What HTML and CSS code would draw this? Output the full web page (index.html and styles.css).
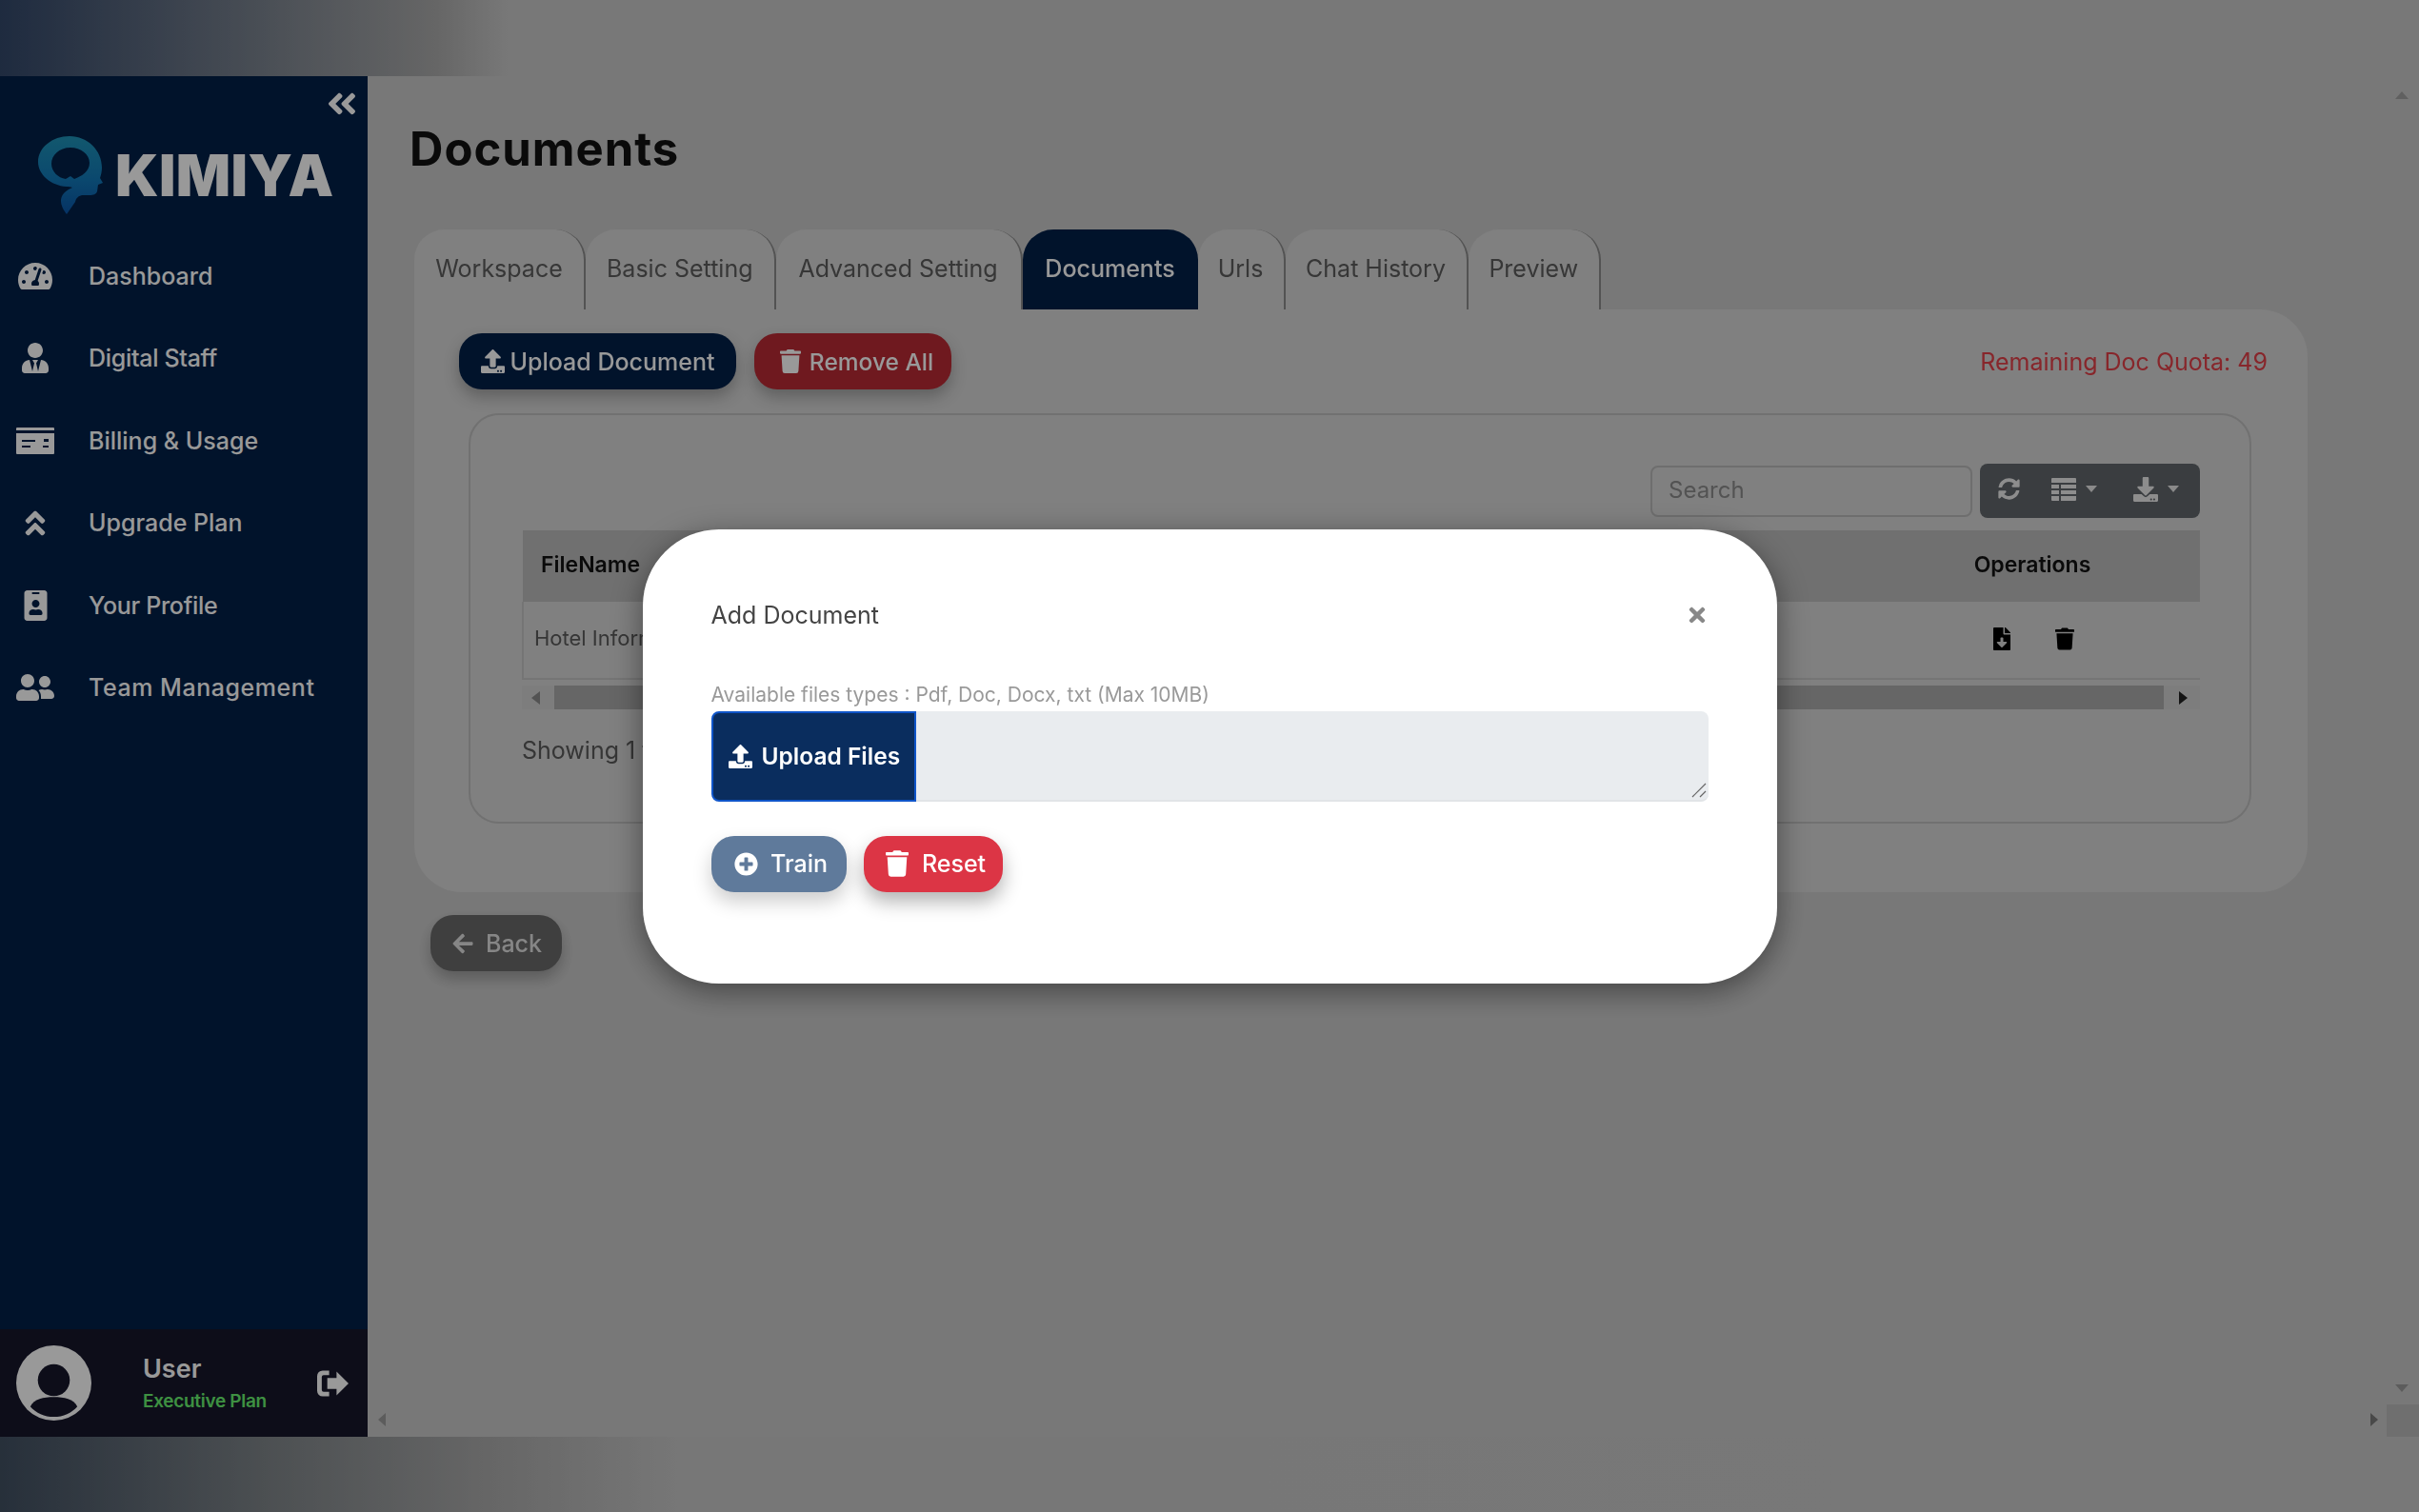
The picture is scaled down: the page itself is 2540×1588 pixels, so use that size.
FILE: index.html
```html
<!DOCTYPE html>
<html lang="en">
<head>
<meta charset="utf-8">
<title>Documents</title>
<link rel="stylesheet" href="styles.css">
</head>
<body>
<svg class="defs" aria-hidden="true">
  <symbol id="i-upload" viewBox="0 0 512 512"><path d="M296 384h-80c-13.3 0-24-10.7-24-24V192h-87.7c-17.8 0-26.7-21.5-14.1-34.1L242.3 5.7c7.5-7.5 19.8-7.5 27.3 0l152.2 152.2c12.6 12.6 3.7 34.1-14.1 34.1H320v168c0 13.3-10.7 24-24 24zm216-8v112c0 13.3-10.7 24-24 24H24c-13.3 0-24-10.7-24-24V376c0-13.3 10.7-24 24-24h136v8c0 30.9 25.1 56 56 56h80c30.9 0 56-25.1 56-56v-8h136c13.3 0 24 10.7 24 24zm-124 88c0-11-9-20-20-20s-20 9-20 20 9 20 20 20 20-9 20-20zm64 0c0-11-9-20-20-20s-20 9-20 20 9 20 20 20 20-9 20-20z"/></symbol>
  <symbol id="i-download" viewBox="0 0 512 512"><path d="M216 0h80c13.3 0 24 10.7 24 24v168h87.7c17.8 0 26.7 21.5 14.1 34.1L269.7 378.3c-7.5 7.5-19.8 7.5-27.3 0L90.1 226.1c-12.6-12.6-3.7-34.1 14.1-34.1H192V24c0-13.3 10.7-24 24-24zm296 376v112c0 13.3-10.7 24-24 24H24c-13.3 0-24-10.7-24-24V376c0-13.3 10.7-24 24-24h146.7l49 49c20.1 20.1 52.5 20.1 72.6 0l49-49H488c13.3 0 24 10.7 24 24zm-124 88c0-11-9-20-20-20s-20 9-20 20 9 20 20 20 20-9 20-20zm64 0c0-11-9-20-20-20s-20 9-20 20 9 20 20 20 20-9 20-20z"/></symbol>
  <symbol id="i-trash" viewBox="0 0 448 512"><path d="M432 32H312l-9.4-18.7A24 24 0 0 0 281.1 0H166.8a23.72 23.72 0 0 0-21.4 13.3L136 32H16A16 16 0 0 0 0 48v32a16 16 0 0 0 16 16h416a16 16 0 0 0 16-16V48a16 16 0 0 0-16-16zM53.2 467a48 48 0 0 0 47.9 45h245.8a48 48 0 0 0 47.9-45L416 128H32z"/></symbol>
  <symbol id="i-dbl-left" viewBox="0 0 448 512"><path d="M223.7 239l136-136c9.4-9.4 24.6-9.4 33.9 0l22.6 22.6c9.4 9.4 9.4 24.6 0 33.9L319.9 256l96.4 96.4c9.4 9.4 9.4 24.6 0 33.9L393.7 409c-9.4 9.4-24.6 9.4-33.9 0l-136-136c-9.5-9.4-9.5-24.6-.1-34zm-192 34l136 136c9.4 9.4 24.6 9.4 33.9 0l22.6-22.6c9.4-9.4 9.4-24.6 0-33.9L127.9 256l96.4-96.4c9.4-9.4 9.4-24.6 0-33.9L201.7 103c-9.4-9.4-24.6-9.4-33.9 0l-136 136c-9.5 9.4-9.5 24.6-.1 34z"/></symbol>
  <symbol id="i-dbl-up" viewBox="0 0 320 512"><path d="M177 255.7l136 136c9.4 9.4 9.4 24.6 0 33.9l-22.6 22.6c-9.4 9.4-24.6 9.4-33.9 0L160 351.9l-96.4 96.4c-9.4 9.4-24.6 9.4-33.9 0L7 425.7c-9.4-9.4-9.4-24.6 0-33.9l136-136c9.4-9.5 24.6-9.5 34-.1zm-34-192L7 199.7c-9.4 9.4-9.4 24.6 0 33.9l22.6 22.6c9.4 9.4 24.6 9.4 33.9 0l96.4-96.4 96.4 96.4c9.4 9.4 24.6 9.4 33.9 0l22.6-22.6c9.4-9.4 9.4-24.6 0-33.9l-136-136c-9.2-9.4-24.4-9.4-33.8 0z"/></symbol>
  <symbol id="i-sync" viewBox="0 0 512 512"><path d="M370.72 133.28C339.458 104.008 298.888 87.962 255.848 88c-77.458.068-144.328 53.178-162.791 126.85-1.344 5.363-6.122 9.15-11.651 9.15H24.103c-7.498 0-13.194-6.807-11.807-14.176C33.933 94.924 134.813 8 256 8c66.448 0 126.791 26.136 171.315 68.685L463.03 40.97C478.149 25.851 504 36.559 504 57.941V192c0 13.255-10.745 24-24 24H345.941c-21.382 0-32.09-25.851-16.971-40.971l41.75-41.749zM32 296h134.059c21.382 0 32.09 25.851 16.971 40.971l-41.75 41.75c31.262 29.273 71.835 45.319 114.876 45.28 77.418-.07 144.315-53.144 162.787-126.849 1.344-5.363 6.122-9.15 11.651-9.15h57.304c7.498 0 13.194 6.807 11.807 14.176C478.067 417.076 377.187 504 256 504c-66.448 0-126.791-26.136-171.315-68.685L48.97 471.03C33.851 486.149 8 475.441 8 454.059V320c0-13.255 10.745-24 24-24z"/></symbol>
  <symbol id="i-plus" viewBox="0 0 512 512"><path d="M256 8C119 8 8 119 8 256s111 248 248 248 248-111 248-248S393 8 256 8zm144 276c0 6.6-5.4 12-12 12h-92v92c0 6.6-5.4 12-12 12h-56c-6.6 0-12-5.4-12-12v-92h-92c-6.6 0-12-5.4-12-12v-56c0-6.6 5.4-12 12-12h92v-92c0-6.6 5.4-12 12-12h56c6.6 0 12 5.4 12 12v92h92c6.6 0 12 5.4 12 12v56z"/></symbol>
  <symbol id="i-times" viewBox="0 0 352 512"><path d="M242.72 256l100.07-100.07c12.28-12.28 12.28-32.19 0-44.48l-22.24-22.24c-12.28-12.28-32.19-12.28-44.48 0L176 189.28 75.93 89.21c-12.28-12.28-32.19-12.28-44.48 0L9.21 111.45c-12.28 12.28-12.28 32.19 0 44.48L109.28 256 9.21 356.07c-12.28 12.28-12.28 32.19 0 44.48l22.24 22.24c12.28 12.28 32.2 12.28 44.48 0L176 322.72l100.07 100.07c12.28 12.28 32.2 12.28 44.48 0l22.24-22.24c12.28-12.28 12.28-32.19 0-44.48L242.72 256z"/></symbol>
  <symbol id="i-back" viewBox="0 0 448 512"><path d="M257.5 445.1l-22.2 22.2c-9.4 9.4-24.6 9.4-33.9 0L7 273c-9.4-9.4-9.4-24.6 0-33.9L201.4 44.7c9.4-9.4 24.6-9.4 33.9 0l22.2 22.2c9.5 9.5 9.3 25-.4 34.3L136.6 216H424c13.3 0 24 10.7 24 24v32c0 13.3-10.7 24-24 24H136.6l120.5 114.8c9.8 9.3 10 24.8.4 34.3z"/></symbol>
  <symbol id="i-team" viewBox="0 0 640 512"><path d="M192 256c61.9 0 112-50.1 112-112S253.9 32 192 32 80 82.1 80 144s50.1 112 112 112zm76.8 32h-8.3c-20.8 10-43.9 16-68.5 16s-47.6-6-68.5-16h-8.3C51.6 288 0 339.6 0 403.2V432c0 26.5 21.5 48 48 48h288c26.5 0 48-21.5 48-48v-28.8c0-63.6-51.6-115.2-115.2-115.2zM480 256c53 0 96-43 96-96s-43-96-96-96-96 43-96 96 43 96 96 96zm48 32h-3.8c-13.9 4.8-28.6 8-44.2 8s-30.3-3.2-44.2-8H432c-20.4 0-39.2 5.9-55.7 15.4 24.4 26.3 39.7 61.2 39.7 99.8v38.4c0 2.2-.5 4.3-.6 6.4H592c26.5 0 48-21.5 48-48 0-61.9-50.1-112-112-112z"/></symbol>
  <symbol id="i-gauge" viewBox="0 0 576 512"><path d="M288 32C128.94 32 0 160.94 0 320c0 52.8 14.25 102.26 39.06 144.8 5.61 9.62 16.3 15.2 27.44 15.2h443c11.14 0 21.83-5.58 27.44-15.2C561.75 422.26 576 372.8 576 320c0-159.06-128.94-288-288-288zm0 64c14.71 0 26.58 10.13 30.32 23.65-1.11 2.26-2.64 4.23-3.45 6.67l-9.22 27.67c-5.13 3.49-10.97 6.01-17.64 6.01-17.67 0-32-14.33-32-32S270.33 96 288 96zM96 384c-17.67 0-32-14.33-32-32s14.33-32 32-32 32 14.33 32 32-14.33 32-32 32zm48-160c-17.67 0-32-14.33-32-32s14.33-32 32-32 32 14.33 32 32-14.33 32-32 32zm246.77-72.41l-61.33 184C343.13 347.33 352 364.54 352 384c0 11.72-3.38 22.55-8.88 32H232.88c-5.5-9.45-8.88-20.28-8.88-32 0-33.94 26.5-61.43 59.9-63.59l61.34-184.01c4.17-12.56 17.73-19.45 30.36-15.17 12.57 4.19 19.35 17.79 15.17 30.36zm14.66 57.2l15.52-46.55c3.47-1.29 7.13-2.23 11.05-2.23 17.67 0 32 14.33 32 32s-14.33 32-32 32c-11.38-.01-20.89-6.28-26.57-15.22zM480 384c-17.67 0-32-14.33-32-32s14.33-32 32-32 32 14.33 32 32-14.33 32-32 32z"/></symbol>
  <symbol id="i-tie" viewBox="0 0 448 512"><path d="M224 256c70.7 0 128-57.3 128-128S294.7 0 224 0 96 57.3 96 128s57.3 128 128 128zm95.8 32.6L272 480l-32-136 32-56h-96l32 56-32 136-47.8-191.4C56.9 292 0 350.3 0 422.4V464c0 26.5 21.5 48 48 48h352c26.5 0 48-21.5 48-48v-41.6c0-72.1-56.9-130.4-128.2-133.8z"/></symbol>
  <symbol id="i-badge" viewBox="0 0 384 512"><path d="M336 0H48C21.5 0 0 21.5 0 48v416c0 26.5 21.5 48 48 48h288c26.5 0 48-21.5 48-48V48c0-26.5-21.5-48-48-48zM144 32h96c8.8 0 16 7.2 16 16s-7.2 16-16 16h-96c-8.8 0-16-7.2-16-16s7.2-16 16-16zm48 128c35.3 0 64 28.7 64 64s-28.7 64-64 64-64-28.7-64-64 28.7-64 64-64zm112 236.8c0 10.6-10 19.2-22.4 19.2H102.4C90 416 80 407.4 80 396.8v-19.2c0-31.8 30.1-57.6 67.2-57.6h5c12.3 5.1 25.7 8 39.8 8s27.6-2.9 39.8-8h5c37.1 0 67.2 25.8 67.2 57.6v19.2z"/></symbol>
  <symbol id="i-filedl" viewBox="0 0 384 512"><path d="M224 136V0H24C10.7 0 0 10.7 0 24v464c0 13.3 10.7 24 24 24h336c13.3 0 24-10.7 24-24V160H248c-13.2 0-24-10.8-24-24zm76.45 211.36l-96.42 95.7c-6.65 6.61-17.39 6.61-24.04 0l-96.42-95.7C73.42 337.29 80.54 320 94.82 320H160v-80c0-8.84 7.16-16 16-16h32c8.84 0 16 7.16 16 16v80h65.18c14.28 0 21.4 17.29 11.27 27.36zM377 105L279.1 7c-4.5-4.5-10.6-7-17-7H256v128h128v-6.1c0-6.3-2.5-12.4-7-16.9z"/></symbol>
  <symbol id="i-card" viewBox="0 0 40 28"><path fill-rule="evenodd" d="M1 0h38a1 1 0 0 1 1 1v2H0V1a1 1 0 0 1 1-1zM0 6h40v21a1 1 0 0 1-1 1H1a1 1 0 0 1-1-1zm6 7v2h14v-2zm0 6v2h9v-2zm23-7v3h5v-3zm-1 7v2h6v-2z"/></symbol>
  <symbol id="i-signout" viewBox="0 0 34 28"><path d="M13 0v5H7a2 2 0 0 0-2 2v14a2 2 0 0 0 2 2h6v5H6a6 6 0 0 1-6-6V6a6 6 0 0 1 6-6zM21 1l13 13-13 13v-7h-10V8h10z"/></symbol>
  <symbol id="i-table" viewBox="0 0 26 24"><path fill-rule="evenodd" d="M1 0h24a1 1 0 0 1 1 1v4H0V1a1 1 0 0 1 1-1zM0 7h8v4H0zm10 0h16v4H10zM0 13h8v4H0zm10 0h16v4H10zM0 19h8v5H1a1 1 0 0 1-1-1zm10 0h16v4a1 1 0 0 1-1 1H10z"/></symbol>
</svg>

<div class="app">
  <div class="band"></div>
  <div class="shell">
    <aside class="sidebar">
      <div class="toggle"><svg class="ico toggle-ico"><use href="#i-dbl-left"/></svg></div>
      <div class="logo">
        <svg class="logo-mark" viewBox="0 0 68 82">
          <defs><linearGradient id="lg" x1="0" y1="0" x2="0" y2="1"><stop offset="0" stop-color="#1f93b8"/><stop offset=".55" stop-color="#1279b8"/><stop offset="1" stop-color="#0a55a8"/></linearGradient></defs>
          <path fill="url(#lg)" fill-rule="evenodd" d="M33 0C52 0 67 15 67 33c0 4-1 8-2 11l3 5-5 2-1 7c-1 3-4 4-8 4h-8c-4 1-6 3-7 7L30 82c-3-4-6-9-6-14 0-5 3-9 8-12l4-2c-2-1-4-1-6-1C13 52 0 40 0 27 0 12 15 0 33 0zM34 12C22 12 14 20 14 29c0 8 7 15 15 16l5-3 4 3c8-3 16-8 16-17C54 19 45 12 34 12z"/>
        </svg>
        <span class="logo-text">KIMIYA</span>
      </div>
      <nav class="nav">
        <a class="nav-item"><span class="nav-ico"><svg class="ico ico-gauge"><use href="#i-gauge"/></svg></span><span>Dashboard</span></a>
        <a class="nav-item"><span class="nav-ico"><svg class="ico ico-tie"><use href="#i-tie"/></svg></span><span class="nav-tight">Digital Staff</span></a>
        <a class="nav-item"><span class="nav-ico"><svg class="ico ico-card"><use href="#i-card"/></svg></span><span>Billing &amp; Usage</span></a>
        <a class="nav-item"><span class="nav-ico"><svg class="ico ico-up"><use href="#i-dbl-up"/></svg></span><span>Upgrade Plan</span></a>
        <a class="nav-item"><span class="nav-ico"><svg class="ico ico-badge"><use href="#i-badge"/></svg></span><span class="nav-tight">Your Profile</span></a>
        <a class="nav-item"><span class="nav-ico"><svg class="ico ico-team"><use href="#i-team"/></svg></span><span class="nav-wide">Team Management</span></a>
      </nav>
      <div class="user">
        <svg class="avatar" viewBox="0 0 80 80">
          <circle cx="40" cy="40" r="40" fill="#fff"/>
          <circle cx="40" cy="37" r="17" fill="#16162b"/>
          <path d="M15 65c4-8 14-10 25-10s21 2 25 10c-6 7-15 11-25 11s-19-4-25-11z" fill="#16162b"/>
        </svg>
        <div class="user-meta">
          <div class="user-name">User</div>
          <div class="user-plan">Executive Plan</div>
        </div>
        <svg class="ico ico-signout"><use href="#i-signout"/></svg>
      </div>
    </aside>

    <main class="main">
      <h1 class="title">Documents</h1>
      <div class="tabs">
        <a class="tab">Workspace</a>
        <a class="tab">Basic Setting</a>
        <a class="tab">Advanced Setting</a>
        <a class="tab tab-active">Documents</a>
        <a class="tab">Urls</a>
        <a class="tab">Chat History</a>
        <a class="tab">Preview</a>
      </div>
      <section class="panel">
        <div class="panel-bar">
          <button class="btn btn-navy"><svg class="ico ico-btn-up"><use href="#i-upload"/></svg>Upload Document</button>
          <button class="btn btn-red"><svg class="ico ico-btn-trash"><use href="#i-trash"/></svg>Remove All</button>
          <span class="quota">Remaining Doc Quota: 49</span>
        </div>
        <div class="card">
          <div class="table-tools">
            <div class="search">Search</div>
            <div class="tool-group">
              <svg class="ico ico-sync"><use href="#i-sync"/></svg>
              <svg class="ico ico-table"><use href="#i-table"/></svg><span class="caret"></span>
              <svg class="ico ico-dl"><use href="#i-download"/></svg><span class="caret"></span>
            </div>
          </div>
          <table class="grid">
            <thead><tr><th class="col-name">FileName</th><th class="col-ops">Operations</th></tr></thead>
            <tbody><tr>
              <td class="cell-name">Hotel Information.pdf</td>
              <td class="cell-ops"><svg class="ico ico-filedl"><use href="#i-filedl"/></svg><svg class="ico ico-rowtrash"><use href="#i-trash"/></svg></td>
            </tr></tbody>
          </table>
          <div class="hscroll">
            <span class="arrow arrow-l"></span>
            <span class="thumb"></span>
            <span class="arrow arrow-r"></span>
          </div>
          <div class="showing">Showing 1 to 1 of 1 rows</div>
        </div>
      </section>
      <button class="btn btn-back"><svg class="ico ico-back"><use href="#i-back"/></svg>Back</button>

      <span class="sb sb-up"></span>
      <span class="sb sb-down"></span>
      <span class="sb sb-left"></span>
      <span class="sb sb-right"></span>
      <span class="sb-corner"></span>
    </main>
  </div>
  <div class="band band-bottom"></div>

  <div class="backdrop">
    <div class="modal">
      <div class="modal-head">
        <span class="modal-title">Add Document</span>
        <svg class="ico ico-close"><use href="#i-times"/></svg>
      </div>
      <div class="hint">Available files types : Pdf, Doc, Docx, txt (Max 10MB)</div>
      <div class="file-row">
        <button class="file-btn"><svg class="ico ico-file-up"><use href="#i-upload"/></svg>Upload Files</button>
        <div class="file-area">
          <svg class="grip" viewBox="0 0 16 16"><path d="M1 15L15 1M9 15l6-6" stroke="#666" stroke-width="1.2" fill="none"/></svg>
        </div>
      </div>
      <div class="modal-actions">
        <button class="btn btn-train"><svg class="ico ico-plus"><use href="#i-plus"/></svg>Train</button>
        <button class="btn btn-reset"><svg class="ico ico-reset"><use href="#i-trash"/></svg>Reset</button>
      </div>
    </div>
  </div>
</div>
</body>
</html>
```

FILE: styles.css
```css
* { box-sizing: border-box; }
html, body { margin: 0; padding: 0; height: 100%; overflow: hidden; }
body { font-family: Inter, "Noto Sans", "Liberation Sans", sans-serif; background: #c9c9c9; }
.defs { width: 0; height: 0; position: absolute; }
.ico { fill: currentColor; display: block; flex: none; }

.app { position: relative; width: 2540px; height: 1588px; display: flex; flex-direction: column; overflow: hidden; filter: blur(.6px); }
.band { height: 80px; flex: none; background: linear-gradient(90deg, #33486a 0, #7c848f 11%, #aaaaaa 18%, #c8c8c8 21%, #c9c9c9 100%); }
.band-bottom { height: 79px; background: linear-gradient(90deg, #415062 0, #7f8589 11%, #aaaaaa 20%, #c6c6c6 28%, #c9c9c9 100%); }
.shell { flex: 1; display: flex; min-height: 0; }

/* sidebar */
.sidebar { width: 386px; flex: none; background: #032149; display: flex; flex-direction: column; color: #fff; }
.toggle { display: flex; justify-content: flex-end; padding: 17px 9px 0 0; }
.toggle-ico { width: 36px; height: 36px; margin: -6px 0 -7px; }
.logo { display: flex; align-items: flex-end; margin: 23px 0 21.5px 40px; height: 82px; }
.logo-mark { width: 68px; height: 82px; flex: none; }
.logo-text { font-weight: 900; font-size: 60px; line-height: 60px; margin: 0 0 11px 13px; letter-spacing: .4px; color: #fff; }
.nav { display: flex; flex-direction: column; }
.nav-item { height: 86.5px; display: flex; align-items: center; gap: 19px; font-size: 25px; font-weight: 500; letter-spacing: 0; }
.nav-tight { letter-spacing: -.3px; }
.nav-wide { letter-spacing: .55px; }
.nav-ico { width: 74px; display: flex; justify-content: center; flex: none; }
.ico-gauge { width: 36px; height: 32px; }
.ico-tie { width: 28px; height: 32px; }
.ico-card { width: 40px; height: 28px; }
.ico-up { width: 22px; height: 33px; }
.ico-badge { width: 25px; height: 32px; }
.ico-team { width: 40px; height: 32px; }
.user { margin-top: auto; height: 113px; background: #16162b; display: flex; align-items: center; padding-left: 17px; }
.avatar { width: 79px; height: 79px; flex: none; }
.user-meta { margin-left: 54px; width: 183px; }
.user-name { font-size: 27px; font-weight: 600; line-height: 34px; }
.user-plan { font-size: 19px; font-weight: 600; line-height: 24px; color: #68f06e; margin-top: 5px; letter-spacing: -.3px; }
.ico-signout { width: 33px; height: 28px; }

/* main */
.main { flex: 1; min-width: 0; position: relative; padding: 47px 0 0 49px; }
.title { margin: 0 0 54px -5px; font-size: 49px; line-height: 60px; font-weight: 700; color: #111; letter-spacing: 1px; }
.tabs { display: grid; grid-template-columns: 180px 199.5px 259px 184px 92px 192px 139.5px; justify-content: start; height: 84px; }
.tab { display: flex; align-items: center; justify-content: center; padding-bottom: 3px; font-size: 25px; color: #5c5c5c; background: #d5d5d5; border-radius: 32px 32px 0 0; border-right: 2px solid #8a8a8a; white-space: nowrap; }
.tab-active { background: #032149; color: #fff; border-right: 0; font-weight: 500; }
.panel { width: 1988px; height: 612px; background: #d5d5d5; border-radius: 0 50px 50px 50px; padding-top: 25px; }
.panel-bar { display: flex; align-items: center; gap: 19px; padding: 0 42px 0 47px; height: 59px; }
.btn { border: 0; height: 59px; border-radius: 24px; display: inline-flex; align-items: center; justify-content: center; font: 500 25px Inter, "Noto Sans", sans-serif; color: #fff; white-space: nowrap; padding: 0; }
.btn-navy { width: 291px; background: #032149; gap: 6px; box-shadow: 0 8px 16px rgba(0,0,0,.25); }
.btn-red { width: 207px; background: #b92b35; gap: 9px; padding-left: 8px; font-size: 24.5px; box-shadow: 0 8px 16px rgba(0,0,0,.25); }
.ico-btn-up { width: 25px; height: 25px; }
.ico-btn-trash { width: 22px; height: 27px; }
.quota { margin-left: auto; font-size: 25px; color: #e24048; }
.card { margin: 25px 59px 0 57px; border: 2px solid #bdbdbd; border-radius: 32px; height: 431px; padding: 51px 52px 0 54px; }
.table-tools { display: flex; justify-content: flex-end; align-items: center; gap: 8px; height: 57px; }
.search { width: 338px; height: 54px; border: 2px solid #b8b8b8; border-radius: 8px; padding-bottom: 2px; background: #d5d5d5; display: flex; align-items: center; padding-left: 17px; font-size: 24px; color: #8a8a8a; }
.tool-group { width: 231px; height: 57px; background: #61666b; border-radius: 8px; color: #ececec; display: flex; align-items: center; padding: 0 0 4px 19px; }
.ico-sync { width: 23px; height: 25px; }
.ico-table { width: 26px; height: 24px; margin-left: 33px; }
.ico-dl { width: 26px; height: 26px; margin-left: 38px; }
.caret { width: 0; height: 0; border: 6px solid transparent; border-top: 7px solid #e6e6e6; border-bottom: 0; margin-left: 10px; }
.grid { width: 100%; border-collapse: collapse; margin-top: 13px; table-layout: fixed; }
.grid th { height: 75px; background: #bbb; font-size: 23px; font-weight: 600; color: #111; padding: 0 0 4px; }
.grid .col-name { text-align: left; padding-left: 19px; }
.col-ops { width: 352px; text-align: center; }
.grid td { height: 81px; border-bottom: 2px solid #c4c4c4; font-size: 22px; color: #5a5a5a; padding: 0 0 5px; }
.grid .cell-name { padding-left: 11px; border-left: 2px solid #c4c4c4; }
.cell-ops svg { display: inline-block; color: #000; vertical-align: middle; }
.grid .cell-ops { padding-left: 135px; }
.ico-filedl { width: 18px; height: 24px; margin-right: 47px; }
.ico-rowtrash { width: 20px; height: 24px; }
.hscroll { margin-top: 6px; height: 25px; display: flex; align-items: center; background: #d0d0d0; }
.thumb { display: block; margin-left: 34px; width: 1690px; height: 25px; background: #aaa; }
.arrow { display: block; width: 0; height: 0; border: 7px solid transparent; }
.arrow-l { border-right: 9px solid #8a8a8a; border-left: 0; position: absolute; margin-left: 10px; }
.arrow-r { border-left: 9px solid #222; border-right: 0; margin-left: 16px; }
.showing { margin-top: 25px; font-size: 25px; line-height: 36px; color: #5a5a5a; }
.btn-back { width: 138px; margin: 24px 0 0 17px; background: #696969; gap: 13px; padding-left: 2px; color: #e0e0e0; box-shadow: 0 8px 16px rgba(0,0,0,.25); display: flex; }
.ico-back { width: 22px; height: 24px; }

/* native-looking scroll bar arrows sit over the content */
.sb { position: absolute; width: 0; height: 0; border: 7px solid transparent; }
.sb-up { right: 11px; top: 16px; border-bottom: 8px solid #a0a0a0; border-top: 0; }
.sb-down { right: 11px; bottom: 47px; border-top: 8px solid #9a9a9a; border-bottom: 0; }
.sb-left { left: 11px; bottom: 11px; border-right: 8px solid #9a9a9a; border-left: 0; }
.sb-right { right: 43px; bottom: 11px; border-left: 8px solid #7a7a7a; border-right: 0; }
.sb-corner { position: absolute; right: 0; bottom: 0; width: 34px; height: 34px; background: #bababa; }

/* modal */
.backdrop { position: absolute; inset: 0; background: rgba(0,0,0,.4); display: flex; align-items: center; justify-content: center; }
.modal { width: 1191px; height: 477px; background: #fff; border-radius: 80px; padding: 72px 72px 0; box-shadow: 0 8px 32px rgba(0,0,0,.45); }
.modal-head { height: 36px; display: flex; align-items: center; justify-content: space-between; }
.modal-title { font-size: 25px; color: #444; }
.ico-close { width: 18px; height: 24px; color: #888; margin-right: 3px; }
.hint { margin-top: 49px; height: 34px; line-height: 34px; font-size: 21px; color: #999; }
.file-row { display: flex; height: 95px; }
.file-btn { width: 215px; height: 95px; border: 2px solid #0f55c9; border-right-width: 2px; border-radius: 8px 0 0 8px; background: #0a2d5e; color: #fff; display: flex; align-items: center; padding: 0 0 0 16px; gap: 10px; font: 600 24.5px Inter, "Noto Sans", sans-serif; white-space: nowrap; }
.ico-file-up { width: 25px; height: 25px; }
.file-area { flex: 1; background: #e9ecef; border-radius: 0 8px 8px 0; display: flex; align-items: flex-end; justify-content: flex-end; padding: 0 2px 2px 0; border-bottom: 2px solid #e1e4e7; }
.grip { width: 16px; height: 16px; }
.modal-actions { display: flex; gap: 18px; margin-top: 36px; }
.btn-train { width: 142px; background: #5f7a9b; gap: 13px; padding-left: 5px; box-shadow: 0 10px 20px rgba(0,0,0,.2); }
.btn-reset { width: 146px; background: #dc3545; gap: 14px; padding-left: 6px; box-shadow: 0 10px 20px rgba(0,0,0,.3); }
.ico-plus { width: 25px; height: 25px; }
.ico-reset { width: 24px; height: 28px; }
```
